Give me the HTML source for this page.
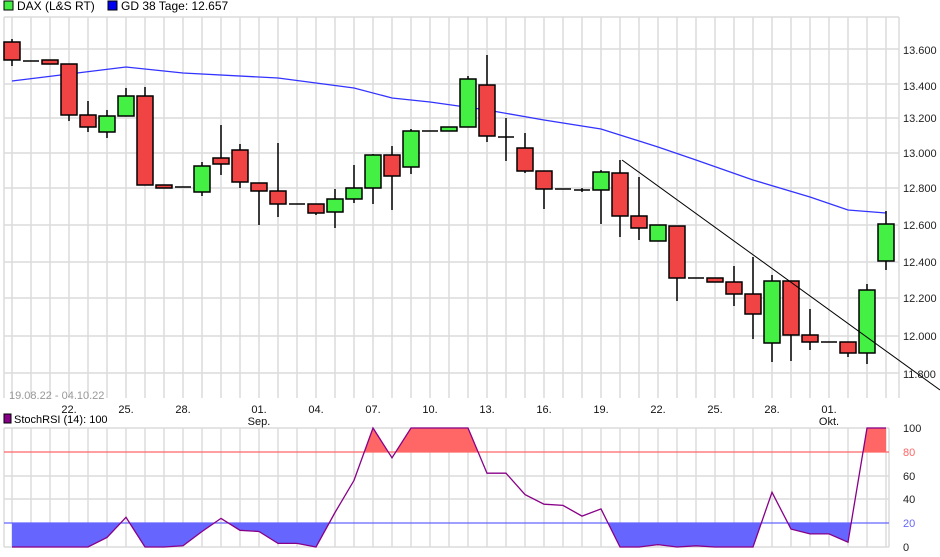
<!DOCTYPE html>
<html><head><meta charset="utf-8"><style>
html,body{margin:0;padding:0;background:#fff;width:940px;height:557px;overflow:hidden}
svg{display:block;font-family:"Liberation Sans",sans-serif}
</style></head><body>
<svg id="s" width="940" height="557" viewBox="0 0 940 557" xmlns="http://www.w3.org/2000/svg">
<defs>
<clipPath id="cr"><rect x="0" y="420" width="940" height="32"/></clipPath>
<clipPath id="cb"><rect x="0" y="523" width="940" height="30"/></clipPath>
</defs>
<g id="grid" stroke="#dcdcdc" stroke-width="1.5" fill="none"></g>
<g id="fills"></g>
<line x1="4" y1="452" x2="889" y2="452" stroke="#ff6666" stroke-width="1.2"/>
<line x1="4" y1="523" x2="889" y2="523" stroke="#6666ff" stroke-width="1.2"/>
<g id="rsi"></g>
<polyline fill="none" stroke="#3333ff" stroke-width="1.3" points="12,81 126,67 183,73 278,78 354,88 392,98 430,102 487,110 544,120 601,129 658,147 696,160 753,180 810,197 848,210 886,213"/>
<g id="candles" stroke="#000" stroke-width="1.5"></g>
<line x1="622" y1="160" x2="940" y2="390" stroke="#000" stroke-width="1"/>
<!-- legend -->
<rect x="4" y="1" width="9" height="9" fill="#44ee44" stroke="#000" stroke-width="1"/>
<text x="17" y="10" font-size="12">DAX (L&amp;S RT)</text>
<rect x="108" y="1" width="9" height="9" fill="#0000ee" stroke="#000" stroke-width="1"/>
<text x="121" y="10" font-size="12">GD 38 Tage: 12.657</text>
<text x="9" y="399" font-size="11" fill="#999">19.08.22 - 04.10.22</text>
<rect x="4" y="414" width="7" height="9" fill="#880088" stroke="#000" stroke-width="1"/>
<text x="14" y="423" font-size="11">StochRSI (14): 100</text>
<g font-size="11" fill="#222">
<text x="903" y="54">13.600</text><text x="903" y="90">13.400</text><text x="903" y="122">13.200</text>
<text x="903" y="157">13.000</text><text x="903" y="192">12.800</text><text x="903" y="229">12.600</text>
<text x="903" y="266">12.400</text><text x="903" y="302">12.200</text><text x="903" y="340">12.000</text>
<text x="903" y="378">11.800</text>
<text x="903" y="432">100</text><text x="903" y="456" fill="#ff6666">80</text><text x="903" y="480">60</text>
<text x="903" y="503">40</text><text x="903" y="527" fill="#6666ff">20</text><text x="903" y="551">0</text>
</g>
<g font-size="11" fill="#111" text-anchor="middle">
<text x="69" y="413">22.</text><text x="126" y="413">25.</text><text x="183" y="413">28.</text>
<text x="259" y="413">01.</text><text x="259" y="425">Sep.</text><text x="316" y="413">04.</text>
<text x="373" y="413">07.</text><text x="430" y="413">10.</text><text x="487" y="413">13.</text>
<text x="544" y="413">16.</text><text x="601" y="413">19.</text><text x="658" y="413">22.</text>
<text x="715" y="413">25.</text><text x="772" y="413">28.</text><text x="829" y="413">01.</text>
<text x="829" y="425">Okt.</text>
</g>
</svg>
<script>
var NS="http://www.w3.org/2000/svg";
function el(p,t,a){var e=document.createElementNS(NS,t);for(var k in a)e.setAttribute(k,a[k]);document.getElementById(p).appendChild(e);return e;}
var X=function(i){return 12+19*i;};
// grid
for(var i=0;i<47;i++){el("grid","line",{x1:X(i),y1:17,x2:X(i),y2:398});el("grid","line",{x1:X(i),y1:428,x2:X(i),y2:547});}
[17,49,84,118,153,188,225,262,298,336,373].forEach(function(y){el("grid","line",{x1:4,y1:y,x2:899,y2:y});});
el("grid","line",{x1:899,y1:17,x2:899,y2:398});el("grid","line",{x1:4,y1:17,x2:4,y2:398});
[428,476,499,547].forEach(function(y){el("grid","line",{x1:4,y1:y,x2:889,y2:y});});
el("grid","line",{x1:889,y1:428,x2:889,y2:547});el("grid","line",{x1:4,y1:428,x2:4,y2:547});
// candles: [c(0 red,1 green,2 flat), top, bot, wickTop, wickBot]
var C=[[0,42,60,39,66],[2,61,61,61,61],[0,60,64,60,64],[0,64,115,64,121],[0,115,127,101,132],[1,116,132,110,138],[1,96,116,88,116],[0,96,185,87,185],[0,185,188,185,188],[2,187,187,187,187],[1,166,192,162,196],[0,158,164,125,175],[0,150,182,144,188],[0,183,191,183,225],[0,191,204,143,217],[2,204,204,204,204],[0,204,213,204,215],[1,199,212,189,228],[1,188,199,165,203],[1,155,188,154,204],[0,155,176,146,210],[1,131,167,129,174],[2,131,131,131,131],[1,127,131,127,131],[1,79,127,76,127],[0,85,136,55,142],[2,137,137,118,161],[0,148,171,133,173],[0,171,189,171,209],[2,189,189,189,189],[2,190,190,188,192],[1,172,190,170,224],[0,173,216,160,237],[0,216,228,177,240],[1,225,241,225,241],[0,226,278,226,301],[2,278,278,278,278],[0,278,282,278,282],[0,282,294,266,306],[0,294,314,257,339],[1,281,343,275,362],[0,281,335,281,361],[0,335,342,309,350],[2,342,342,342,342],[0,342,353,342,357],[1,290,353,284,364],[1,224,261,211,270]];
C.forEach(function(c,i){var x=X(i);
 if(c[3]<c[4])el("candles","line",{x1:x,y1:c[3],x2:x,y2:c[4]});
 if(c[0]==2)el("candles","line",{x1:x-8,y1:c[1],x2:x+8,y2:c[1]});
 else el("candles","rect",{x:x-8,y:c[1],width:16,height:Math.max(c[2]-c[1],2),fill:c[0]?"#44f044":"#f04444"});
});
// RSI
var R=[0,0,0,0,0,8,25,0,0,1,13,24,14,13,3,3,0,29,56,100,75,100,100,100,100,62,62,44,36,35,26,32,0,0,2,0,1,0,0,0,46,15,11,11,4,100,100];
var pts=R.map(function(v,i){return X(i)+","+(547-1.19*v).toFixed(1);}).join(" ");
el("fills","polygon",{points:pts+" "+X(46)+",547 12,547",fill:"#ff6666","clip-path":"url(#cr)"});
el("fills","polygon",{points:pts+" "+X(46)+",428 12,428",fill:"#6666ff","clip-path":"url(#cb)"});
el("rsi","polyline",{points:pts,fill:"none",stroke:"#880088","stroke-width":1.3});
</script>
</body></html>
